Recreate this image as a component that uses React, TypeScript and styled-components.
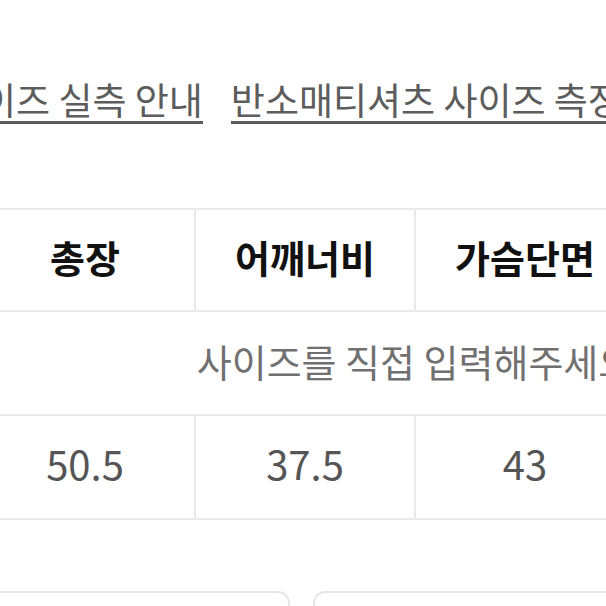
import React from "react";
import styled, { createGlobalStyle } from "styled-components";

const GlobalStyle = createGlobalStyle`
  html, body {
    margin: 0;
    padding: 0;
    background: #ffffff;
    overflow: hidden;
  }
  body {
    font-family: "Noto Sans CJK KR", "Noto Sans", sans-serif;
    width: 606px;
    height: 606px;
  }
`;

const Page = styled.div`
  width: 606px;
  height: 606px;
  overflow: hidden;
  padding-top: 78px;
  box-sizing: border-box;
`;

const LinkRow = styled.div`
  display: flex;
  gap: 28px;
  margin-left: -52px;
  white-space: nowrap;
`;

const GuideLink = styled.span`
  display: inline-block;
  font-size: 37px;
  line-height: 42px;
  color: #5c5c5c;
  padding-bottom: 1px;
  border-bottom: 3px solid #5c5c5c;
`;

const Table = styled.div`
  margin-top: 84px;
  margin-left: -26px;
  width: 882px;
  display: grid;
  grid-template-columns: repeat(4, 218px);
  grid-template-rows: 100px 102px 102px;
  gap: 2px;
  padding: 2px;
  box-sizing: border-box;
  background: #e9e9e9;
`;

const Cell = styled.div<{ $span?: number }>`
  background: #ffffff;
  display: flex;
  align-items: center;
  justify-content: center;
  white-space: nowrap;
  grid-column: ${(p) => (p.$span ? `span ${p.$span}` : "auto")};
`;

const HeadText = styled.span`
  font-size: 38px;
  line-height: 1;
  font-weight: 700;
  color: #111111;
  padding-bottom: 6px;
`;

const HintText = styled.span`
  font-size: 38px;
  line-height: 1;
  color: #707070;
  padding-bottom: 4px;
`;

const ValueText = styled.span`
  font-size: 40px;
  line-height: 1;
  color: #555555;
  padding-bottom: 8px;
`;

const ButtonRow = styled.div`
  display: flex;
  gap: 23px;
  margin-top: 71px;
  margin-left: -26px;
`;

const OutlineBox = styled.div<{ $width: number }>`
  width: ${(p) => p.$width}px;
  height: 70px;
  flex: none;
  border: 2px solid #e6e6e6;
  border-radius: 12px;
  box-sizing: border-box;
`;

const headers = ["총장", "어깨너비", "가슴단면", "소매길이"];
const values = ["50.5", "37.5", "43", "20"];

export default function App() {
  return (
    <>
      <GlobalStyle />
      <Page>
        <LinkRow>
          <GuideLink>사이즈 실측 안내</GuideLink>
          <GuideLink>반소매티셔츠 사이즈 측정 방법</GuideLink>
        </LinkRow>
        <Table>
          {headers.map((h) => (
            <Cell key={h}>
              <HeadText>{h}</HeadText>
            </Cell>
          ))}
          <Cell $span={4}>
            <HintText>사이즈를 직접 입력해주세요</HintText>
          </Cell>
          {values.map((v, i) => (
            <Cell key={i}>
              <ValueText>{v}</ValueText>
            </Cell>
          ))}
        </Table>
        <ButtonRow>
          <OutlineBox $width={316} />
          <OutlineBox $width={316} />
        </ButtonRow>
      </Page>
    </>
  );
}
